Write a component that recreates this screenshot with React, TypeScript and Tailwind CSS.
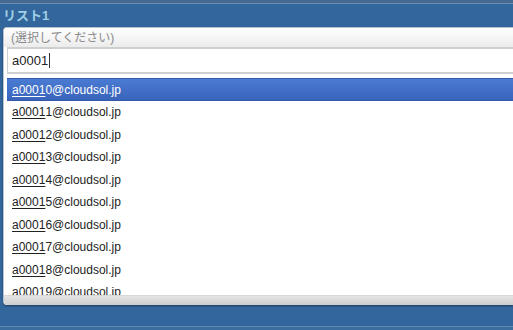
import React from 'react';

const items = ['0', '1', '2', '3', '4', '5', '6', '7', '8', '9'];

export default function App() {
  return (
    <div
      className="w-[513px] h-[330px] overflow-hidden bg-[#32669c] flex flex-col"
      style={{ fontFamily: '"Liberation Sans", Arial, "Noto Sans CJK JP", sans-serif' }}
    >
      {/* top strip */}
      <div className="h-[3px] bg-[#46698f] border-b border-[#6d8fb3] box-content" />

      {/* header */}
      <div className="h-[23px] flex items-center pl-[3px] pb-[1px] text-[13px] font-bold text-[#9fd0e6] leading-none">
        リスト1
      </div>

      {/* dropdown panel */}
      <div className="ml-[3px] bg-white rounded-l-[4px] border-l border-t border-[#b8c4d0] overflow-hidden flex flex-col shadow-[0_1px_2px_rgba(0,0,0,0.4)]">
        <div className="h-[19px] bg-gradient-to-b from-white to-[#ececec] flex items-center pl-[7px] text-[12px] text-[#8a8a8a] leading-none">
          (選択してください)
        </div>

        <div className="pl-[3px]">
          <div className="h-[27px] border-t-2 border-b-2 border-l border-[#cfcfcf] bg-white flex items-center pl-[4px] text-[13px] text-[#222] leading-none">
            a0001<span className="ml-[1px] w-px h-[15px] bg-[#333]" />
          </div>
        </div>

        <div className="pl-[3px] mt-[4px] h-[217px] overflow-hidden">
          {items.map((d, i) => (
            <div
              key={d}
              className={
                i === 0
                  ? 'h-[23px] flex items-center pl-[5px] text-[12px] text-white bg-gradient-to-b from-[#4a7bd2] to-[#3a64bc] border-t border-b border-[#3358a8]'
                  : 'h-[22.5px] flex items-center pl-[5px] text-[12px] text-[#222]'
              }
            >
              <span className="underline underline-offset-2">a0001</span>
              {d}@cloudsol.jp
            </div>
          ))}
        </div>

        <div className="h-[10px] bg-gradient-to-b from-[#e4e4e4] to-[#cdcdcd] border-t border-[#d8d8d8]" />
      </div>

      <div className="flex-1" />
      <div className="h-[4px] bg-[#3b6d9f] border-t border-[#6188b2]" />
    </div>
  );
}
